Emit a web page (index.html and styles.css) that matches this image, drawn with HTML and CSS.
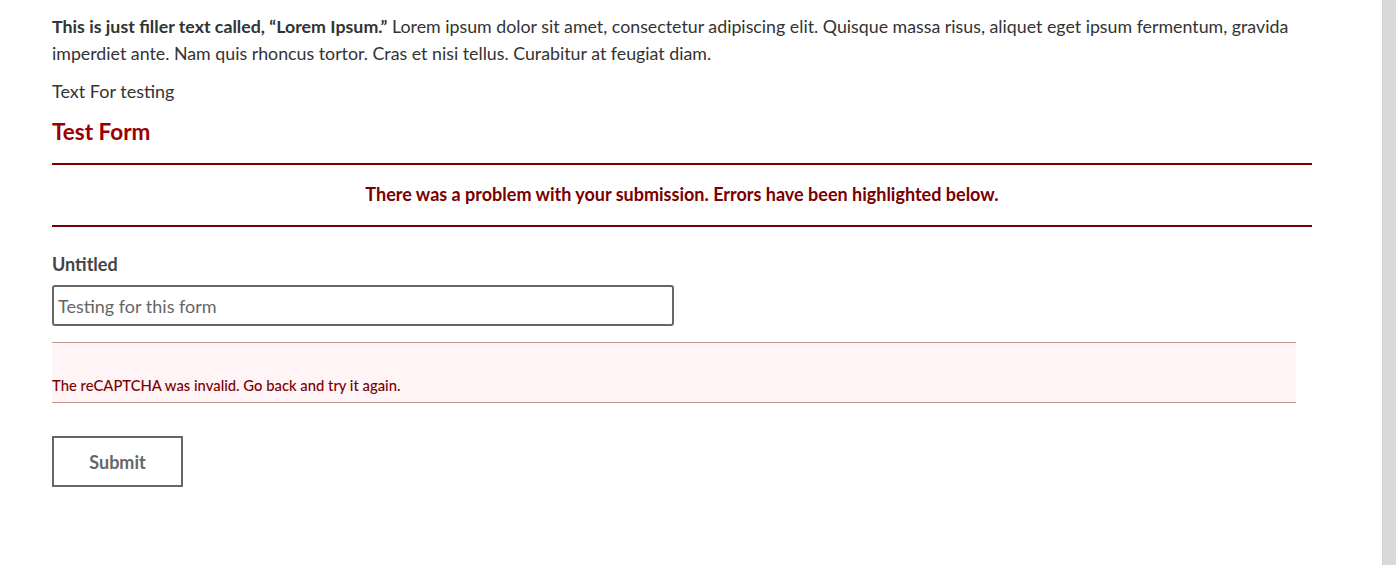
FILE: index.html
```html
<!DOCTYPE html>
<html lang="en">
<head>
  <meta charset="UTF-8" />
  <meta name="viewport" content="width=device-width, initial-scale=1.0" />
  <title>Test Form</title>
  <link rel="stylesheet" href="styles.css">
</head>
<body>
  <div class="page">
    <main class="content">
      <p><strong>This is just filler text called, “Lorem Ipsum.”</strong> Lorem ipsum dolor sit amet, consectetur adipiscing elit. Quisque massa risus, aliquet eget ipsum fermentum, gravida imperdiet ante. Nam quis rhoncus tortor. Cras et nisi tellus. Curabitur at feugiat diam.</p>
      <p class="short">Text For testing</p>

      <h3 class="form-title">Test Form</h3>

      <form class="form">
        <div class="form-error">There was a problem with your submission. Errors have been highlighted below.</div>

        <div class="field">
          <label for="untitled">Untitled</label>
          <input type="text" id="untitled" placeholder="Testing for this form">
        </div>

        <div class="field-error">
          <div class="captcha-msg">The reCAPTCHA was invalid. Go back and try it again.</div>
        </div>

        <button type="button" class="submit">Submit</button>
      </form>
    </main>
    <div class="side-strip"></div>
  </div>
</body>
</html>
```

FILE: styles.css
```css
html, body {
  margin: 0;
  height: 100%;
}
body {
  font-family: Lato, "Open Sans", sans-serif;
  font-size: 17.8px;
  color: #333;
  background: #fff;
}
.page {
  display: flex;
  min-height: 100%;
}
.content {
  flex: 1;
  padding: 13px 70px 0 52px;
}
.side-strip {
  width: 13px;
  background: #d9d9d9;
  border-left: 1px solid #cfcfcf;
}
p {
  margin: 0 0 11px;
  line-height: 27px;
}
.short {
  font-size: 18px;
  margin-bottom: 12px;
}
.form-title {
  margin: 0;
  font-size: 22.5px;
  font-weight: 700;
  color: #990000;
  line-height: 30px;
}
.form-error {
  margin-top: 16px;
  border-top: 2px solid #790000;
  border-bottom: 2px solid #790000;
  padding: 18px 0 19px;
  text-align: center;
  font-size: 18px;
  font-weight: 700;
  color: #790000;
  line-height: 23px;
}
.field {
  margin-top: 26px;
}
.field label {
  display: block;
  font-size: 18px;
  font-weight: 700;
  color: #444;
  margin-bottom: 10px;
}
.field input {
  box-sizing: border-box;
  display: block;
  width: 622px;
  height: 41px;
  border: 2px solid #666;
  border-radius: 3px;
  padding: 0 4px;
  font-family: inherit;
  font-size: 18px;
  color: #333;
}
.field input::placeholder {
  color: #666;
}
.field-error {
  margin-top: 16px;
  margin-right: 16px;
  background: #fff5f6;
  border-top: 1px solid #c89595;
  border-bottom: 1px solid #c89595;
  padding: 33px 0 7px;
}
.captcha-msg {
  font-size: 14.8px;
  font-weight: 500;
  color: #790000;
  line-height: 19px;
}
.submit {
  display: block;
  margin-top: 33px;
  width: 131px;
  height: 51px;
  background: #fff;
  border: 2px solid #666;
  font-family: inherit;
  font-size: 18px;
  font-weight: 700;
  color: #666;
  cursor: pointer;
}
```
